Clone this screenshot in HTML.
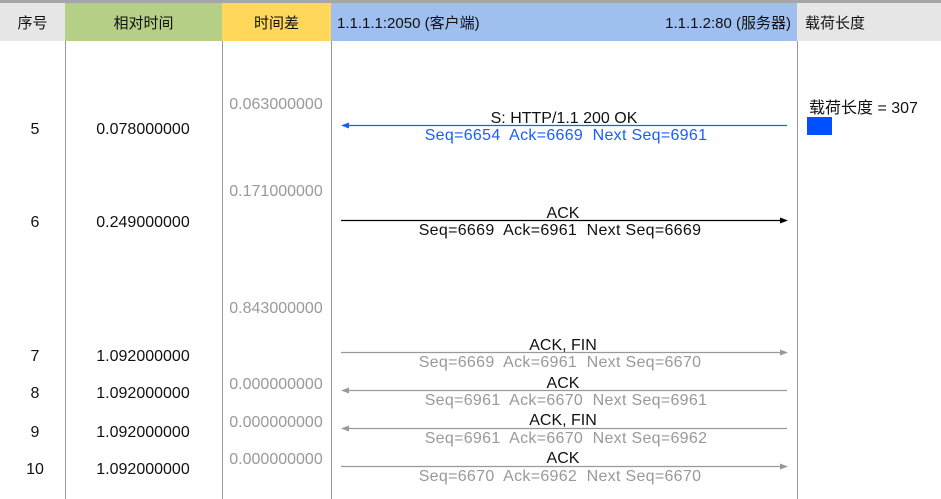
<!DOCTYPE html>
<html><head><meta charset="utf-8"><style>
body{margin:0;width:941px;height:499px;background:#fff;position:relative;overflow:hidden;font-family:"Liberation Sans","Noto Sans CJK SC",sans-serif;font-size:16px;color:#111}
.a{position:absolute;white-space:nowrap;line-height:16px;margin-top:2px}
.c{transform:translateX(-50%)}
.s{letter-spacing:0.3px}
.h{position:absolute;top:3px;height:38px;line-height:42px;font-size:15px}
.v{position:absolute;top:41px;bottom:0;width:1px;background:#999}
.g{color:#999}
.b{color:#1a5cff}
</style></head><body>
<div style="position:absolute;left:0;top:0;width:941px;height:3px;background:#a6a6a6"></div>
<div class="h" style="left:0;width:65px;background:#e6e6e6;text-align:center">序号</div>
<div class="h" style="left:65px;width:157px;background:#b5cf86;text-align:center">相对时间</div>
<div class="h" style="left:222px;width:109px;background:#ffd75a;text-align:center">时间差</div>
<div class="h" style="left:331px;width:466px;background:#9fbfef"><span style="position:absolute;left:6px">1.1.1.1:2050 (客户端)</span><span style="position:absolute;right:6px">1.1.1.2:80 (服务器)</span></div>
<div class="h" style="left:797px;width:144px;background:#e6e6e6;padding-left:8px;box-sizing:border-box">载荷长度</div>
<div class="v" style="left:65px"></div><div class="v" style="left:222px"></div><div class="v" style="left:331px"></div><div class="v" style="left:797px"></div>

<div class="a c" style="left:35px;top:120px">5</div><div class="a c" style="left:143px;top:120px">0.078000000</div><div class="a c g" style="left:276px;top:95px">0.063000000</div>
<div class="a c" style="left:35px;top:213px">6</div><div class="a c" style="left:143px;top:213px">0.249000000</div><div class="a c g" style="left:276px;top:182px">0.171000000</div>
<div class="a c g" style="left:276px;top:299px">0.843000000</div>
<div class="a c" style="left:35px;top:347px">7</div><div class="a c" style="left:143px;top:347px">1.092000000</div>
<div class="a c" style="left:35px;top:384px">8</div><div class="a c" style="left:143px;top:384px">1.092000000</div><div class="a c g" style="left:276px;top:375px">0.000000000</div>
<div class="a c" style="left:35px;top:423px">9</div><div class="a c" style="left:143px;top:423px">1.092000000</div><div class="a c g" style="left:276px;top:413px">0.000000000</div>
<div class="a c" style="left:35px;top:460px">10</div><div class="a c" style="left:143px;top:460px">1.092000000</div><div class="a c g" style="left:276px;top:450px">0.000000000</div>

<svg style="position:absolute;left:0;top:0" width="941" height="499">
<g stroke-width="1.2">
<line x1="344" y1="125.5" x2="787" y2="125.5" stroke="#1a5cff"/><path d="M341 125.5l8-3v6z" fill="#1a5cff"/>
<line x1="341" y1="220.5" x2="784" y2="220.5" stroke="#000"/><path d="M788 220.5l-8-3v6z" fill="#000"/>
<line x1="341" y1="352.5" x2="784" y2="352.5" stroke="#999"/><path d="M788 352.5l-8-3v6z" fill="#999"/>
<line x1="344" y1="390.5" x2="787" y2="390.5" stroke="#999"/><path d="M341 390.5l8-3v6z" fill="#999"/>
<line x1="344" y1="428.5" x2="787" y2="428.5" stroke="#999"/><path d="M341 428.5l8-3v6z" fill="#999"/>
<line x1="341" y1="466.5" x2="784" y2="466.5" stroke="#999"/><path d="M788 466.5l-8-3v6z" fill="#999"/>
</g></svg>

<div class="a c" style="left:564px;top:109px">S: HTTP/1.1 200 OK</div>
<div class="a c b s" style="left:566px;top:126px">Seq=6654&nbsp; Ack=6669&nbsp; Next Seq=6961</div>
<div class="a c" style="left:563px;top:204px">ACK</div>
<div class="a c s" style="left:560px;top:221px">Seq=6669&nbsp; Ack=6961&nbsp; Next Seq=6669</div>
<div class="a c" style="left:563px;top:336px">ACK, FIN</div>
<div class="a c g s" style="left:560px;top:353px">Seq=6669&nbsp; Ack=6961&nbsp; Next Seq=6670</div>
<div class="a c" style="left:563px;top:374px">ACK</div>
<div class="a c g s" style="left:566px;top:391px">Seq=6961&nbsp; Ack=6670&nbsp; Next Seq=6961</div>
<div class="a c" style="left:563px;top:411px">ACK, FIN</div>
<div class="a c g s" style="left:566px;top:429px">Seq=6961&nbsp; Ack=6670&nbsp; Next Seq=6962</div>
<div class="a c" style="left:563px;top:449px">ACK</div>
<div class="a c g s" style="left:560px;top:467px">Seq=6670&nbsp; Ack=6962&nbsp; Next Seq=6670</div>

<div class="a" style="left:809px;top:99px">载荷长度 = 307</div>
<div style="position:absolute;left:807px;top:117px;width:25px;height:18px;background:#0050ff"></div>
</body></html>
